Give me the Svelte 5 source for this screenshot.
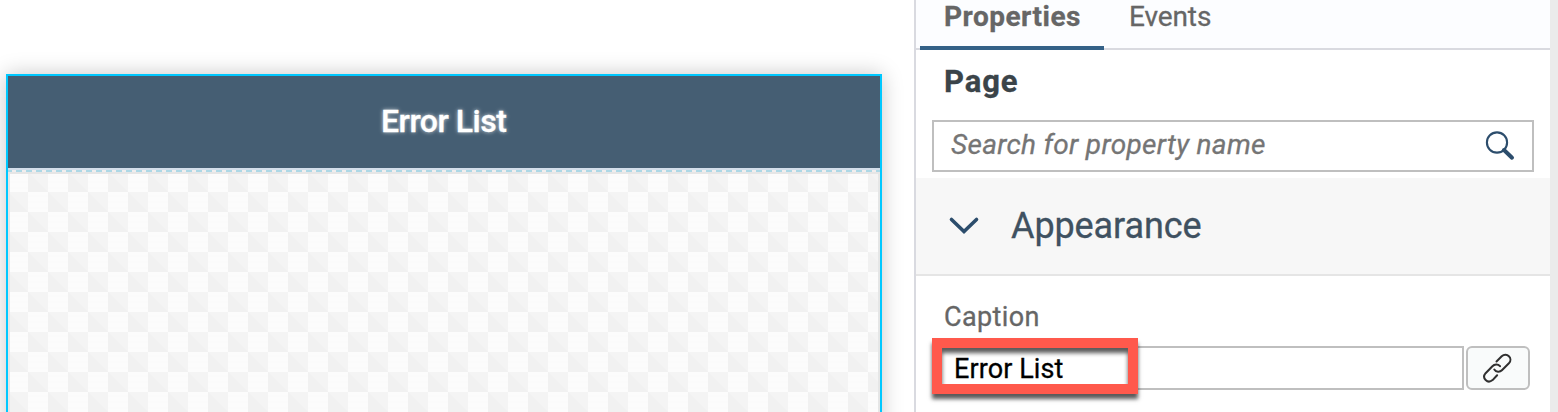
<script>
  const caption = 'Error List';
</script>

<div class="workspace">
  <main class="canvas">
    <section class="device">
      <header><span>{caption}</span></header>
      <div class="edge"></div>
      <svg class="dash" width="872" height="2" aria-hidden="true">
        <defs>
          <pattern id="dash" width="20" height="2" patternUnits="userSpaceOnUse">
            <rect width="20" height="2" fill="#f1eeee" />
            <path d="M0 1h4M8 1h6M18 1h2" stroke="#add8e6" stroke-width="2" />
          </pattern>
        </defs>
        <rect width="872" height="2" fill="url(#dash)" />
      </svg>
      <svg class="grid" width="872" height="240" aria-hidden="true">
        <defs>
          <pattern id="tiles" width="40" height="40" patternUnits="userSpaceOnUse">
            <rect width="40" height="40" fill="#fcfcfc" />
            <path d="M0 4h20M0 10h20M0 16h20M20 24h20M20 30h20M20 36h20" stroke="#fafafa" />
            <path d="M20 0h20v20h-20zM0 20h20v20H0z" fill="#f4f4f4" />
            <path d="M20 0l20 20h-20zM0 20l20 20H0z" fill="#f1f1f1" />
          </pattern>
        </defs>
        <rect width="872" height="240" fill="url(#tiles)" />
        <path d="M0 1h872M1 0v240M871 0v240" fill="none" stroke="#e6e6e6" stroke-width="2" />
      </svg>
    </section>
  </main>

  <aside>
    <nav>
      <span class="tab active">Properties</span>
      <span class="tab">Events</span>
    </nav>
    <h2><span>Page</span></h2>
    <div class="search">
      <span>Search for property name</span>
      <svg width="32" height="32" viewBox="0 0 32 32" fill="none" stroke="#2c4d6c">
        <circle cx="13" cy="12.5" r="10.1" stroke-width="2.1" />
        <path d="M20 20l8 7.7" stroke-width="4" stroke-linecap="round" />
      </svg>
    </div>
    <div class="group">
      <svg width="32" height="20" viewBox="0 0 32 20" fill="none" stroke="#2c4d6c">
        <path d="M3.5 3.5L16 15.5L28.5 3.5" stroke-width="3.6" stroke-linecap="round" />
      </svg>
      <span>Appearance</span>
    </div>
    <div class="label"><span>Caption</span></div>
    <div class="field">
      <div class="input"><span>{caption}</span></div>
      <div class="link">
        <svg width="32" height="32" viewBox="0 0 32 32" fill="none" stroke="#303030" stroke-width="2" stroke-linecap="round" stroke-linejoin="round">
          <path d="M14.5 9.5l5.2-5.2c5-4.5 11.8 2 7.2 7l-7 7c-2 2-5.8 2-7.6-.8" />
          <path d="M18 14.2c-2.2-2.6-5.6-2-7.6 0l-6.8 7c-4.2 5 2 11 7 6.9l4.5-4.9" />
        </svg>
      </div>
      <div class="callout"></div>
    </div>
  </aside>
  <div class="rail"></div>
</div>

<style>
  :global(body) { background: #fff; overflow: hidden; }
  .workspace { display: flex; width: 1558px; height: 412px; overflow: hidden; font-family: Roboto, sans-serif; white-space: nowrap; }
  .workspace * { box-sizing: border-box; }
  .workspace span { display: inline-block; -webkit-text-stroke: .3px currentColor; }
  svg { display: block; flex: none; }
  .canvas { width: 914px; padding: 74px 0 0 6px; }
  .device { width: 876px; height: 360px; border: 2px solid #00c8ff; background: #fff; box-shadow: 0 0 20px rgba(0, 0, 0, .22); }
  header { height: 92px; background: #455e73; color: #fff; padding-left: 373px; }
  header span { font-size: 32px; font-weight: 500; line-height: 90px; letter-spacing: -.5px; text-shadow: 0 0 4px rgba(255, 255, 255, .75); }
  .edge { height: 2px; background: #d3deea; }
  aside { width: 636px; border-left: 2px solid #d9dae0; background: #fff; }
  nav { display: flex; height: 50px; padding-left: 4px; gap: 25px; border-bottom: 2px solid #d9dae0; background: #fcfdff; color: #666; font-size: 28px; line-height: 33px; }
  .tab { height: 50px; letter-spacing: -.1px; }
  .active { width: 184px; padding-left: 24px; border-bottom: 4px solid #346187; font-weight: 700; letter-spacing: .5px; }
  h2 { margin: 0; height: 70px; padding-left: 28px; color: #3b4449; font-size: 31px; line-height: 63px; font-weight: 700; letter-spacing: .9px; }
  .search { display: flex; justify-content: space-between; width: 602px; height: 52px; margin-left: 16px; border: 2px solid #bfbfbf; padding: 7px 16px 0 17px; color: #757575; font-size: 28px; font-style: italic; line-height: 32px; letter-spacing: .32px; }
  .search svg { margin-top: 1px; }
  .group { display: flex; height: 98px; margin-top: 6px; padding: 38px 0 0 32px; background: #f7f7f7; border-bottom: 2px solid #e5e5e5; color: #3f5161; font-size: 36px; letter-spacing: -.1px; }
  .group span { margin: -14px 0 0 31px; line-height: 48px; }
  .label { height: 70px; padding: 23px 0 0 28px; color: #666; font-size: 27px; line-height: 36px; letter-spacing: .4px; }
  .field { position: relative; display: flex; gap: 2px; margin-left: 16px; height: 44px; }
  .input { width: 532px; border: 2px solid #bfbfbf; padding-left: 20px; color: #000; font-size: 27px; line-height: 42px; letter-spacing: .1px; }
  .link { display: flex; align-items: center; justify-content: center; width: 64px; border: 2px solid #bfbfbf; border-radius: 6px; background: #f9fbfb; }
  .callout { position: absolute; left: 0; top: -8px; width: 206px; height: 56px; border: 10px solid #ff594c; box-shadow: 0 5px 4px rgba(0, 0, 0, .65), inset 0 5px 4px rgba(0, 0, 0, .65); }
  .rail { width: 8px; background: #ebebeb; }
</style>
